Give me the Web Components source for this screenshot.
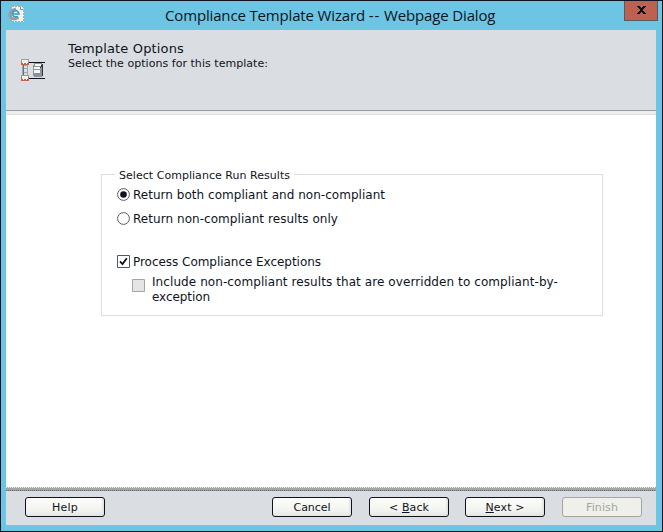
<!DOCTYPE html>
<html lang="en"><head><meta charset="utf-8"><title>Compliance Template Wizard</title>
<style>html,body{margin:0;width:663px;height:532px;overflow:hidden}</style></head>
<body><wizard-dialog></wizard-dialog>
<script>
function define(name, html, ready) {
  const t = document.createElement('template');
  t.innerHTML = html;
  customElements.define(name, class extends HTMLElement {
    constructor() { super(); this.attachShadow({mode:'open'}).append(t.content.cloneNode(true)); }
    connectedCallback() { if (ready) ready.call(this, this.shadowRoot); }
  });
}

/* A single line of text whose tracking is adjusted to a given width. */
define('fit-text', `<style>:host{display:block;white-space:pre}span{display:inline-block}</style><span><slot></slot></span>`, function (r) {
  const s = r.querySelector('span'), w = +this.getAttribute('w');
  const n = this.textContent.length;
  if (w) s.style.letterSpacing = ((w - s.getBoundingClientRect().width) / n) + 'px';
});

define('title-bar', `<style>
:host{display:grid;grid-template-columns:24px 1fr 34px;height:29px;padding:0 4px 0 7px;box-sizing:border-box;color:#10131d;font:15px/28px "Open Sans","Noto Sans",sans-serif}
.icon{margin-top:4px;width:18px;height:18px}
fit-text{padding-left:133px}
i{font-style:normal;letter-spacing:1px}
.close{box-sizing:border-box;width:34px;height:20px;border:1px solid #565963;border-top:0;background:#bd6150;display:flex;align-items:center;justify-content:center}
.close svg{margin-top:-1px}
</style>
<svg class="icon" viewBox="0 0 18 18"><path d="M4 1h9l3 3v13H4z" fill="#f4f2ec"/><path d="M4 1.500h9M15.500 5v11M4 16.500h12" stroke="#a2a9ac" stroke-dasharray="2 1" fill="none"/><path d="M12.500 1.500v3h3" fill="#fff" stroke="#888"/><path d="M10.500 12.500Q4 16 2 11Q1 6 8 4" fill="none" stroke="#999d9e" stroke-width="3"/><path d="M4.500 9h6.500Q10 5.500 7.500 5.500Q4.500 6 4.500 9.200Q5.500 13 10 11.500" fill="none" stroke="#3c9cc4" stroke-width="1.700"/></svg>
<fit-text w="330">Compliance Template Wizard <i>--</i> Webpage Dialog</fit-text>
<div class="close"><svg width="9" height="8" viewBox="0 0 9 8" shape-rendering="crispEdges"><path d="M0 0h3v1h1v1h1v-1h1v-1h3v1h-1v1h-1v1h-1v2h1v1h1v1h1v1h-3v-1h-1v-1h-1v1h-1v1h-3v-1h1v-1h1v-1h1v-2h-1v-1h-1v-1h-1z" fill="#10131d"/></svg></div>`);

define('page-header', `<style>
:host{display:flex;height:80px;box-sizing:border-box;background:#dadee2;padding:11px 0 0 15px;color:#10131d}
svg{width:25px;height:24px;margin-top:18px}
.t{padding-left:22px}
.a{font-size:13px;line-height:15px}.b{font-size:11px;line-height:13px;padding-top:1px}
</style>
<svg viewBox="0 0 25 24" shape-rendering="crispEdges">
<path d="M8 3h16v1H8zM8 19h16v1H8z" fill="#10131d"/>
<path d="M1 6h6v11H1z" fill="#a3a8a9"/><path d="M2 6h1v11H2z" fill="#686e73"/><path d="M3 7h3v2H3zM3 10h3v3H3zM3 14h3v2H3z" fill="#dcdedc"/>
<path d="M0 0h8v6H0zM0 16h8v6H0z" fill="#bd6150"/>
<path d="M1 0h6v4H6v1H5V4H3v1H2V4H1zM1 16h6v4H6v1H5v-1H3v1H2v-1H1z" fill="#f4f2ec"/>
<path d="M0 0h8v1H0zM0 1h1v2H0zM7 1h1v2H7zM0 16h8v1H0zM0 17h1v1H0zM7 17h1v1H7z" fill="#999d9e"/>
<path d="M13 4h8v1h1v12h-1v1h-8v-1h-1V6h1z" fill="#8d9497"/><path d="M14 5h6v2h-6zM13 8h6v2h-6zM13 11h6v3h-6z" fill="#f7f6f1"/><path d="M21 5h1v12h-1zM20 6h1v2h-1zM19 8h1v1h-1z" fill="#30363e"/><path d="M15 14h3v1h-3zM14 16h2v1h-2z" fill="#549dbb"/>
</svg>
<div class="t"><fit-text class="a" w="116">Template Options</fit-text><fit-text class="b" w="200">Select the options for this template:</fit-text></div>`);

define('option-row', `<style>
:host{display:flex;font-size:12px;line-height:15px;color:#10131d}
svg{width:13px;height:13px;flex:none}
.l{padding-left:3px}
:host([type=off]) .l{padding-left:7px}
g{display:none}
:host([type=on]) .radio,:host([type=on]) .dot,:host([type=radio]) .radio,:host([type=check]) .check,:host([type=off]) .off{display:inline}
:host([type=off]) svg{margin-top:4px}
</style>
<svg viewBox="0 0 13 13"><g class="radio"><circle cx="6.500" cy="6.500" r="5.900" fill="#fff" stroke="#565a60"/></g><g class="dot"><circle cx="6.500" cy="6.500" r="3.300" fill="#10131d"/></g>
<g class="check"><path d="M.5.5h12v12H.5z" fill="#fff" stroke="#4f5964"/><path d="M3 6.300L5.500 9 9.800 3.300" fill="none" stroke="#10131d" stroke-width="1.800"/></g>
<g class="off"><path d="M.5.5h12v12H.5z" fill="#e4e6e5" stroke="#a3a5a3"/></g></svg><div class="l"><slot></slot></div>`);

define('option-group', `<style>
:host{display:block;box-sizing:border-box;width:502px;height:142px;border:1px solid #dcdfe0;margin:59px 0 0 95px;padding-left:15px}
.lg{width:179px;height:13px;margin:-6px 0 0 -2px;padding-left:4px;box-sizing:border-box;background:#fff;font-size:11px;line-height:13px;color:#10131d}
.r1{margin-top:6px}.r2{margin-top:9px}.r3{margin-top:28px}.r4{margin:5px 0 0 15px}
</style>
<div class="lg"><fit-text w="171">Select Compliance Run Results</fit-text></div>
<option-row class="r1" type="on"><fit-text w="252">Return both compliant and non-compliant</fit-text></option-row>
<option-row class="r2" type="radio"><fit-text w="205">Return non-compliant results only</fit-text></option-row>
<option-row class="r3" type="check"><fit-text w="188">Process Compliance Exceptions</fit-text></option-row>
<option-row class="r4" type="off"><fit-text w="406">Include non-compliant results that are overridden to compliant-by-</fit-text><fit-text w="58">exception</fit-text></option-row>`);

define('wizard-button', `<style>
:host{display:flex;box-sizing:border-box;width:80px;height:20px;border:1px solid #10131d;border-radius:3px;background:linear-gradient(#fdfdfb,#f3f3ee 70%,#e3e6e6);box-shadow:inset -2px -1px 1px #e3e6e6;justify-content:center;color:#10131d;font-size:11px;line-height:20px}
:host([disabled]){border-color:#a3a5a3;color:#a3a5a3;background:#eff0ea;box-shadow:none}
</style><slot></slot>`);

define('button-bar', `<style>
:host{display:flex;box-sizing:border-box;height:34px;padding:6px 14px 0 19px;background:#dadee2}
.c{margin-left:167px}.b{margin-left:17px}.n{margin-left:16px}.f{margin-left:17px}
u{text-underline-offset:1px;text-decoration-thickness:1px;text-decoration-skip-ink:none}
</style>
<wizard-button><fit-text w="26">Help</fit-text></wizard-button>
<wizard-button class="c"><fit-text w="37">Cancel</fit-text></wizard-button>
<wizard-button class="b"><fit-text w="40">&lt; <u>B</u>ack</fit-text></wizard-button>
<wizard-button class="n"><fit-text w="39"><u>N</u>ext &gt;</fit-text></wizard-button>
<wizard-button class="f" disabled><fit-text w="32">Finish</fit-text></wizard-button>`);

define('wizard-dialog', `<style>
:host{display:flex;flex-direction:column;box-sizing:border-box;width:663px;height:532px;border:1px solid #10131d;background:#6bc5e3;font-family:"DejaVu Sans",sans-serif}
.main{display:flex;flex-direction:column;width:650px;height:495px;margin-left:5px}
.rule{height:5px;box-sizing:border-box;border-top:1px solid #999b9b;border-bottom:1px solid #dadee2;background:#eff0ea}
.content{flex:1;background:#fff}
.split{height:4px;background:repeating-linear-gradient(90deg,#686b6b 0 1px,#999b98 1px 2px) 0 3px/100% 1px no-repeat,repeating-linear-gradient(90deg,#eeefeb 0 1px,#a3a5a3 1px 2px) 0 0/100% 1px no-repeat,#a3a5a1}
</style>
<title-bar></title-bar><div class="main"><page-header></page-header><div class="rule"></div><div class="content"><option-group></option-group></div><div class="split"></div><button-bar></button-bar></div>`);
</script></body></html>
